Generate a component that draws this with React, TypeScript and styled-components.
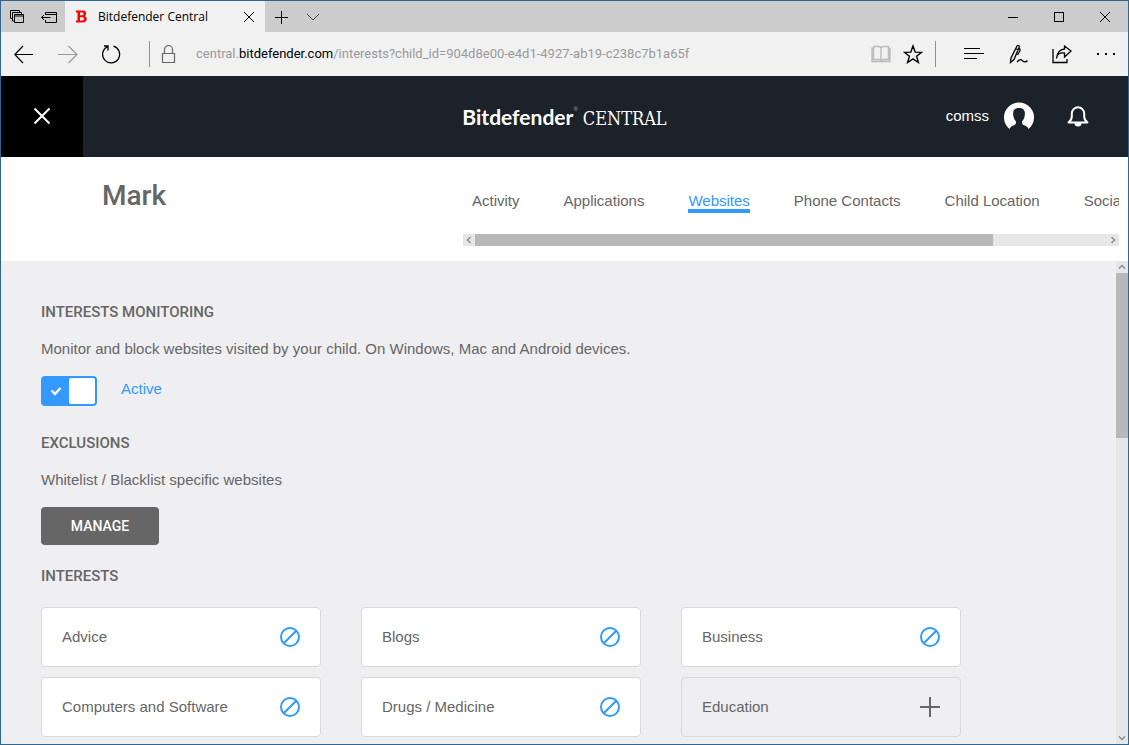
import React, { useState } from "react";
import styled, { createGlobalStyle, css } from "styled-components";

const sans = '"Liberation Sans", Arial, sans-serif';
const roboto = 'Roboto, "Liberation Sans", sans-serif';
const system = '"Open Sans", "Noto Sans", sans-serif';

const GlobalStyle = createGlobalStyle`
  *, *::before, *::after { box-sizing: border-box; }
  body { margin: 0; font-family: ${sans}; font-size: 15px; line-height: 20px; color: #666; background: #efeff1; }
  button { border: 0; padding: 0; background: none; font: inherit; color: inherit; cursor: pointer; }
  svg { display: block; flex: none; }
  h1, h2, p { margin: 0; }
`;

const Window = styled.div`
  display: flex;
  flex-direction: column;
  height: 100vh;
  border: 1px solid #2f6690;
  overflow: hidden;
`;

const TabStrip = styled.div`
  display: flex;
  flex: none;
  height: 31px;
  background: #ccc;
  color: #000;
`;

const StripButton = styled.button<{ $width: number }>`
  display: flex;
  flex: none;
  align-items: center;
  justify-content: center;
  width: ${(p) => p.$width}px;
  height: 100%;
`;

const BrowserTab = styled.div`
  display: flex;
  flex: none;
  align-items: center;
  width: 200px;
  padding: 0 10px 0 11px;
  background: #f1f1f1;
  font-family: ${system};
  font-size: 12px;
`;

const TabTitle = styled.span`
  flex: 1;
  margin-left: 11px;
  white-space: nowrap;
`;

const Spacer = styled.div`
  flex: 1;
`;

const Toolbar = styled.div`
  display: flex;
  flex: none;
  align-items: center;
  height: 44px;
  padding-left: 1px;
  background: #f1f1f1;
  color: #000;
`;

const ToolButton = styled.button<{ $narrow?: boolean }>`
  display: flex;
  flex: none;
  align-items: center;
  justify-content: center;
  width: ${(p) => (p.$narrow ? 32 : 44)}px;
  height: 44px;
`;

const Divider = styled.span<{ $left: number; $right: number }>`
  flex: none;
  width: 1px;
  height: 26px;
  margin: 0 ${(p) => p.$right}px 0 ${(p) => p.$left}px;
  background: #919191;
`;

const Address = styled.div`
  flex: 1;
  min-width: 0;
  margin-left: 20px;
  overflow: hidden;
  font-family: ${roboto};
  font-size: 13px;
  white-space: nowrap;
  color: #999;
  outline: none;
`;

const Host = styled.span`
  color: #000;
`;

const AppHeader = styled.header`
  display: grid;
  flex: none;
  grid-template-columns: 1fr auto 1fr;
  align-items: center;
  height: 81px;
  background: #1b2229;
  color: #fff;
`;

const MenuClose = styled.button`
  display: flex;
  align-items: center;
  justify-content: center;
  width: 82px;
  height: 81px;
  padding-bottom: 2px;
  background: #000;
`;

const Brand = styled.div`
  display: flex;
  align-items: baseline;
  padding-top: 2px;
  line-height: 24px;
  white-space: nowrap;
`;

const BrandName = styled.span`
  font-family: Lato, sans-serif;
  font-size: 21px;
  font-weight: 700;
`;

const Registered = styled.sup`
  align-self: flex-start;
  font-size: 6px;
  line-height: 8px;
  color: #aaa;
`;

const BrandProduct = styled.span`
  margin-left: 5px;
  font-family: "DejaVu Serif Condensed", "DejaVu Serif", serif;
  font-size: 18px;
`;

const Account = styled.div`
  display: flex;
  align-items: center;
  justify-content: flex-end;
  padding: 0 39px 2px 0;
`;

const AccountButton = styled.button`
  display: flex;
  align-items: center;
  gap: 15px;
  margin-right: 33px;
`;

const ProfileBar = styled.div`
  display: flex;
  flex: none;
  height: 104px;
  background: #fff;
`;

const ProfileName = styled.h1`
  flex: 0 0 462px;
  padding: 23px 0 0 101px;
  font-family: ${roboto};
  font-size: 28px;
  font-weight: 500;
  line-height: 32px;
`;

const TabsArea = styled.div`
  flex: 1;
  min-width: 0;
  margin-right: 9px;
  padding-top: 36px;
`;

const Tabs = styled.nav`
  display: flex;
  gap: 44px;
  padding-left: 9px;
  overflow: hidden;
`;

const TabLink = styled.a<{ $active?: boolean }>`
  flex: none;
  border-bottom: 4px solid ${(p) => (p.$active ? "#3399ff" : "transparent")};
  line-height: 16px;
  white-space: nowrap;
  text-decoration: none;
  color: ${(p) => (p.$active ? "#3399ff" : "#666")};
`;

const ScrollTrack = styled.div<{ $vertical?: boolean }>`
  display: flex;
  flex: none;
  background: #e6e6e6;
  ${(p) =>
    p.$vertical
      ? css`
          flex-direction: column;
          width: 12px;
        `
      : css`
          height: 12px;
          margin-top: 21px;
        `}
`;

const ScrollArrow = styled.button`
  display: flex;
  flex: none;
  align-items: center;
  justify-content: center;
  width: 12px;
  height: 12px;
`;

const ScrollLane = styled.div<{ $vertical?: boolean }>`
  display: flex;
  flex: 1;
  flex-direction: ${(p) => (p.$vertical ? "column" : "row")};
`;

const ScrollThumb = styled.div<{ $share: number }>`
  flex: 0 0 ${(p) => p.$share}%;
  background: #b8b8b8;
`;

const Body = styled.div`
  display: flex;
  flex: 1;
  min-height: 0;
  background: #efeff1;
`;

const Content = styled.main`
  flex: 1;
  min-width: 0;
  padding: 41px 40px 0;
  overflow: hidden;
`;

const Section = styled.section`
  margin-bottom: 21px;
`;

const Heading = styled.h2`
  font-family: ${roboto};
  font-size: 15px;
  font-weight: 500;
  line-height: 20px;
`;

const Description = styled.p`
  margin: 17px 0;
`;

const SwitchLabel = styled.label`
  display: flex;
  align-items: flex-start;
  gap: 24px;
  position: relative;
  width: max-content;
  height: 36px;
  line-height: 26px;
  color: #3399ff;
  cursor: pointer;
`;

const SwitchInput = styled.input`
  position: absolute;
  width: 56px;
  height: 30px;
  margin: 0;
  opacity: 0;
`;

const SwitchTrack = styled.span<{ $on: boolean }>`
  display: flex;
  flex-direction: ${(p) => (p.$on ? "row" : "row-reverse")};
  align-items: center;
  width: 56px;
  height: 30px;
  padding: 2px;
  border-radius: 4px;
  background: ${(p) => (p.$on ? "#3399ff" : "#999")};
`;

const SwitchMark = styled.span`
  display: flex;
  flex: 1;
  justify-content: center;
`;

const SwitchKnob = styled.span`
  width: 26px;
  height: 26px;
  border-radius: 2px;
  background: #fff;
`;

const ManageButton = styled.button`
  display: block;
  width: 118px;
  height: 38px;
  border-radius: 4px;
  background: #666;
  color: #fff;
  font-family: ${roboto};
  font-size: 14px;
  font-weight: 500;
`;

const Cards = styled.div`
  display: grid;
  grid-template-columns: repeat(auto-fill, 280px);
  gap: 10px 40px;
  margin-top: 21px;
`;

const Card = styled.button<{ $blocked: boolean }>`
  display: flex;
  align-items: center;
  justify-content: space-between;
  height: 60px;
  padding: 0 20px;
  border: 1px solid #d9d9d9;
  border-radius: 4px;
  background: ${(p) => (p.$blocked ? "#fff" : "transparent")};
`;

type IconProps = { w?: number; h?: number; sw?: number; color?: string; crisp?: boolean; children: React.ReactNode };
const Icon = ({ w = 20, h = 20, sw = 1, color = "#000", crisp, children }: IconProps) => (
  <svg width={w} height={h} viewBox={`0 0 ${w} ${h}`} fill="none" stroke={color} strokeWidth={sw} shapeRendering={crisp ? "crispEdges" : undefined} aria-hidden="true">
    {children}
  </svg>
);

const chevrons = {
  left: "M7.5 3 4.5 6l3 3",
  right: "M4.5 3l3 3-3 3",
  up: "M3 7.5l3-3 3 3",
  down: "M3 4.5l3 3 3-3",
};

const Arrow = ({ to }: { to: keyof typeof chevrons }) => (
  <ScrollArrow type="button" aria-label={`Scroll ${to}`}>
    <Icon w={12} h={12} sw={1.4} color="#8a8a8a">
      <path d={chevrons[to]} />
    </Icon>
  </ScrollArrow>
);

const tabs = ["Activity", "Applications", "Websites", "Phone Contacts", "Child Location", "Social"];

const interests = [
  { name: "Advice", blocked: true },
  { name: "Blogs", blocked: true },
  { name: "Business", blocked: true },
  { name: "Computers and Software", blocked: true },
  { name: "Drugs / Medicine", blocked: true },
  { name: "Education", blocked: false },
];

const BrowserChrome = () => (
  <>
    <TabStrip>
      <StripButton $width={32} type="button" aria-label="Tabs you've set aside">
        <Icon w={16} h={16}>
          <path d="M3.500 9.500h-2v-8h9v2M5.500 12h-2V3.500h9v2M5.500 5.500h9v8h-9zM5 7h10" />
        </Icon>
      </StripButton>
      <StripButton $width={32} type="button" aria-label="Set these tabs aside">
        <Icon w={18} h={16}>
          <path d="M5.500 6V3.500h11v10h-11V11M5 5.500h12M1.500 8.500h9M4 6 1.500 8.500 4 11" />
        </Icon>
      </StripButton>
      <BrowserTab>
        <svg width="11" height="13" viewBox="0 0 11 13" aria-hidden="true">
          <path fill="#f00" fillRule="evenodd" d="M0 .5h6.500c2.400 0 3.700 1.200 3.700 3 0 1.300-.7 2.200-1.700 2.600 1.400.4 2.200 1.400 2.200 2.900 0 2.300-1.600 3.500-4.200 3.500H0v-2h1.500v-8H0zM4 2.600v2.700h1.900c1 0 1.600-.5 1.600-1.400 0-.9-.6-1.300-1.600-1.300zM4 7.300v3.100h2.200c1.100 0 1.700-.5 1.700-1.500 0-1.100-.6-1.600-1.700-1.600z" />
        </svg>
        <TabTitle>Bitdefender Central</TabTitle>
        <StripButton $width={12} type="button" aria-label="Close tab">
          <Icon w={12} h={12}>
            <path d="M1 1l10 10M11 1 1 11" />
          </Icon>
        </StripButton>
      </BrowserTab>
      <StripButton $width={32} type="button" aria-label="New tab">
        <Icon w={14} h={14} crisp>
          <path d="M7.500 1v13M1 7.500h13" />
        </Icon>
      </StripButton>
      <StripButton $width={32} type="button" aria-label="Show tab previews">
        <Icon w={14} h={8} color="#444">
          <path d="M1 1l6 6 6-6" />
        </Icon>
      </StripButton>
      <Spacer />
      <StripButton $width={46} type="button" aria-label="Minimize">
        <Icon w={10} h={10} crisp>
          <path d="M0 5.500h10" />
        </Icon>
      </StripButton>
      <StripButton $width={46} type="button" aria-label="Maximize">
        <Icon w={10} h={10} crisp>
          <path d="M.5.500h9v9h-9z" />
        </Icon>
      </StripButton>
      <StripButton $width={46} type="button" aria-label="Close">
        <Icon w={12} h={12}>
          <path d="M1 1l10 10M11 1 1 11" />
        </Icon>
      </StripButton>
    </TabStrip>
    <Toolbar>
      <ToolButton type="button" aria-label="Back">
        <Icon sw={1.200}>
          <path d="M.5 10.500H19M9 2 .8 10.500 9 19" />
        </Icon>
      </ToolButton>
      <ToolButton type="button" aria-label="Forward">
        <Icon sw={1.200} color="#999">
          <path d="M0 10.500h19M10.500 2l8.500 8.500-8.500 8.500" />
        </Icon>
      </ToolButton>
      <ToolButton type="button" aria-label="Refresh">
        <Icon sw={1.300}>
          <path d="M11.500 2.200a8.500 8.500 0 1 1-6.300.6M2 2h4v4.500" />
        </Icon>
      </ToolButton>
      <Divider $left={15} $right={11} />
      <Icon w={15} color="#666" sw={1.200}>
        <path d="M1.500 9.500h12v9h-12zM3.500 9.500V5.500a4 4 0 0 1 8 0v4" />
      </Icon>
      <Address role="textbox" aria-label="Address" tabIndex={0}>
        central.<Host>bitdefender.com</Host>/interests?child_id=904d8e00-e4d1-4927-ab19-c238c7b1a65f
      </Address>
      <ToolButton $narrow type="button" aria-label="Reading view">
        <Icon color="#bbb" sw={1.400}>
          <path d="M10 3.500c-1-1-2-1-3-1H2.500v13H8c1 0 1.500.5 2 1 .5-.5 1-1 2-1h5.500v-13H13c-1 0-2 0-3 1zM10 3.500v14M2.500 4.500H1v13h18v-13h-1.500" />
        </Icon>
      </ToolButton>
      <ToolButton $narrow type="button" aria-label="Add to favorites">
        <Icon sw={1.400}>
          <path d="M10 2l2.200 6.100 6.400.2-5 4 1.800 6.200-5.400-3.600-5.400 3.600 1.800-6.200-5-4 6.400-.2z" />
        </Icon>
      </ToolButton>
      <Divider $left={6} $right={16} />
      <ToolButton type="button" aria-label="Hub">
        <Icon crisp>
          <path d="M0 4.500h16M0 9.500h20M0 14.500h12.500" />
        </Icon>
      </ToolButton>
      <ToolButton type="button" aria-label="Make a web note">
        <Icon sw={1.300}>
          <path d="M2.500 18.500l.5-4.500L9 2c.8-1.200 2.800-.2 2.200 1.200L6 15.500zM7.500 4.500l3 1.500M11.500 4.500c.8 1 .8 2-.2 3.500L9.500 11M9 18c2.500-3 4-3 5.500-1.200 1.500 1.500 3.500 1.500 5-.3" />
        </Icon>
      </ToolButton>
      <ToolButton type="button" aria-label="Share">
        <Icon sw={1.300}>
          <path d="M1 5v13.500h14V15M4.500 14.500c.5-5 3.500-6 8-5.500V13l6.500-6-6.500-5V5C8 5.500 5 8.500 4.500 14.500z" />
        </Icon>
      </ToolButton>
      <ToolButton type="button" aria-label="More">
        <svg width="20" height="20" viewBox="0 0 20 20" aria-hidden="true">
          <path d="M1 9h2v2H1zM9 9h2v2H9zM17 9h2v2h-2z" />
        </svg>
      </ToolButton>
    </Toolbar>
  </>
);

export default function App() {
  const [active, setActive] = useState(true);
  return (
    <>
      <GlobalStyle />
      <Window>
        <BrowserChrome />
        <AppHeader>
          <MenuClose type="button" aria-label="Close menu">
            <Icon w={18} h={18} sw={2} color="#fff">
              <path d="M1.500 1.500l15 15M16.500 1.500l-15 15" />
            </Icon>
          </MenuClose>
          <Brand>
            <BrandName>Bitdefender</BrandName>
            <Registered>®</Registered>
            <BrandProduct>CENTRAL</BrandProduct>
          </Brand>
          <Account>
            <AccountButton type="button">
              comss
              <svg width="30" height="30" viewBox="0 0 30 30" aria-hidden="true">
                <path fill="#fff" d="M5.500 28A15 15 0 1 1 24.500 28C23.500 25.500 22 25 20 24.200 18 23.500 18 22 18 20.500 19.500 19 20.500 17 20.800 14 21.500 9 19 7 15 7S8.500 9 9.200 14C9.500 17 10.500 19 12 20.500c0 1.500 0 3-2 3.700-2 .8-3.500 1.300-4.500 3.800z" />
              </svg>
            </AccountButton>
            <StripButton $width={22} type="button" aria-label="Notifications">
              <svg width="22" height="22" viewBox="0 0 22 22" aria-hidden="true">
                <path fill="none" stroke="#fff" strokeWidth="2" strokeLinejoin="round" d="M1.500 17.500c2.500-1.800 3.300-3.500 3.300-6V8.500a6.200 6.200 0 0 1 12.400 0v3c0 2.500.8 4.200 3.300 6z" />
                <path fill="#fff" d="M7.500 18h7a3.500 3.500 0 0 1-7 0z" />
              </svg>
            </StripButton>
          </Account>
        </AppHeader>
        <ProfileBar>
          <ProfileName>Mark</ProfileName>
          <TabsArea>
            <Tabs>
              {tabs.map((t) => (
                <TabLink key={t} href="#" $active={t === "Websites"}>
                  {t}
                </TabLink>
              ))}
            </Tabs>
            <ScrollTrack>
              <Arrow to="left" />
              <ScrollLane>
                <ScrollThumb $share={82} />
              </ScrollLane>
              <Arrow to="right" />
            </ScrollTrack>
          </TabsArea>
        </ProfileBar>
        <Body>
          <Content>
            <Section>
              <Heading>INTERESTS MONITORING</Heading>
              <Description>Monitor and block websites visited by your child. On Windows, Mac and Android devices.</Description>
              <SwitchLabel>
                <SwitchInput type="checkbox" checked={active} onChange={() => setActive(!active)} />
                <SwitchTrack $on={active}>
                  <SwitchMark>
                    <Icon w={12} h={10} sw={2.400} color="#fff">
                      <path d="M1.500 4.500L5 8l5.500-6" />
                    </Icon>
                  </SwitchMark>
                  <SwitchKnob />
                </SwitchTrack>
                {active ? "Active" : "Inactive"}
              </SwitchLabel>
            </Section>
            <Section>
              <Heading>EXCLUSIONS</Heading>
              <Description>Whitelist / Blacklist specific websites</Description>
              <ManageButton type="button">MANAGE</ManageButton>
            </Section>
            <Section>
              <Heading>INTERESTS</Heading>
              <Cards>
                {interests.map((i) => (
                  <Card key={i.name} type="button" $blocked={i.blocked}>
                    {i.name}
                    {i.blocked ? (
                      <Icon sw={2} color="#3399ff">
                        <circle cx="10" cy="10" r="9" />
                        <path d="M3.700 16.300L16.300 3.700" />
                      </Icon>
                    ) : (
                      <Icon sw={2} color="#666">
                        <path d="M10 0v20M0 10h20" />
                      </Icon>
                    )}
                  </Card>
                ))}
              </Cards>
            </Section>
          </Content>
          <ScrollTrack $vertical>
            <Arrow to="up" />
            <ScrollLane $vertical>
              <ScrollThumb $share={36} />
            </ScrollLane>
            <Arrow to="down" />
          </ScrollTrack>
        </Body>
      </Window>
    </>
  );
}
